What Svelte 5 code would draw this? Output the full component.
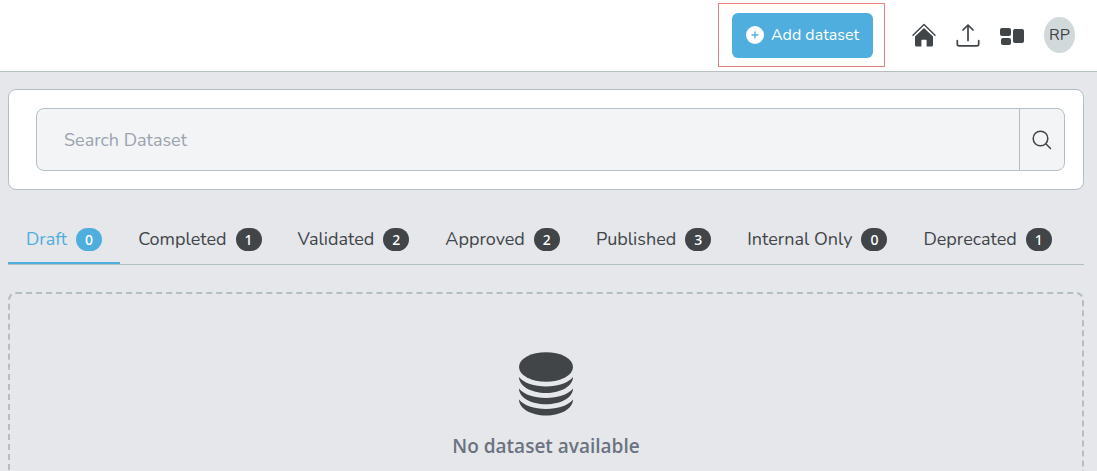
<script>
  let search = $state('');
  let active = $state('Draft');

  const tabs = [
    { name: 'Draft', count: 0 },
    { name: 'Completed', count: 1 },
    { name: 'Validated', count: 2 },
    { name: 'Approved', count: 2 },
    { name: 'Published', count: 3 },
    { name: 'Internal Only', count: 0 },
    { name: 'Deprecated', count: 1 }
  ];
</script>

<header>
  <div class="highlight">
    <button class="add">
      <svg width="18" height="18" viewBox="0 0 18 18">
        <circle cx="9" cy="9" r="9" fill="#fff" />
        <path d="M9 6v6M6 9h6" stroke="#4faedd" stroke-width="1.3" stroke-linecap="round" />
      </svg>
      Add dataset
    </button>
  </div>
  <nav>
    <a href="#home" aria-label="Home">
      <svg width="24" height="24" viewBox="0 0 24 24">
        <path d="M1 12.3 12 1.6l11 10.7" fill="none" stroke="#414548" stroke-width="1.4" stroke-linecap="round" stroke-linejoin="round" />
        <path d="M12 4.9 21 13.4V22a1.6 1.6 0 0 1-1.6 1.6h-4.8v-6.1a.7.7 0 0 0-.7-.7h-3.8a.7.7 0 0 0-.7.7v6.1H4.6A1.6 1.6 0 0 1 3 22v-8.6z" fill="#414548" />
      </svg>
    </a>
    <a href="#upload" aria-label="Upload">
      <svg width="24" height="24" viewBox="0 0 24 24" fill="none" stroke="#414548" stroke-width="1.7" stroke-linecap="round" stroke-linejoin="round">
        <path d="M12 17.5V2M7 7l5-5 5 5" />
        <path d="M1.3 17.5V21a1.8 1.8 0 0 0 1.8 1.8h17.8a1.8 1.8 0 0 0 1.8-1.8v-3.5" />
      </svg>
    </a>
    <a href="#dashboard" aria-label="Dashboard">
      <svg width="24" height="24" viewBox="0 0 24 24" fill="#414548">
        <rect x="0" y="5" width="11" height="8" rx="2" />
        <rect x="1" y="15" width="10" height="7" rx="2" />
        <rect x="13" y="6" width="11" height="14" rx="2" />
      </svg>
    </a>
    <button class="avatar">RP</button>
  </nav>
</header>

<main>
  <form class="card" onsubmit={(e) => e.preventDefault()}>
    <div class="search">
      <input type="text" placeholder="Search Dataset" aria-label="Search Dataset" bind:value={search} />
      <button aria-label="Search">
        <svg width="20" height="20" viewBox="0 0 20 20" fill="none" stroke="#414548" stroke-width="1.5" stroke-linecap="round">
          <circle cx="8.5" cy="8.5" r="7.3" />
          <path d="m13.8 13.8 4.7 4.7" />
        </svg>
      </button>
    </div>
  </form>

  <div class="tabs" role="tablist">
    {#each tabs as tab}
      <button
        class="tab"
        class:active={active === tab.name}
        role="tab"
        aria-selected={active === tab.name}
        onclick={() => (active = tab.name)}
      >
        {tab.name}
        <span class="badge">{tab.count}</span>
      </button>
    {/each}
  </div>

  <section class="empty">
    <svg width="54" height="64" viewBox="0 0 54 64" fill="#414548">
      <ellipse cx="27" cy="15" rx="27" ry="14.8" />
      <path d="M0 25c5 6 15 9.500 27 9.500S49 31 54 25c0 9-12 16-27 16S0 34 0 25z" />
      <path d="M0 36.500c5 6 15 9.500 27 9.500s22-3.500 27-9.500c0 9-12 15.800-27 15.800S0 45.500 0 36.500z" />
      <path d="M0 47.500c5 6 15 9.500 27 9.500s22-3.500 27-9.500c0 9-12 16-27 16S0 56.500 0 47.500z" />
    </svg>
    <p>No dataset available</p>
  </section>
</main>

<style>
  :global(body) {
    margin: 0;
    background: #e5e7eb;
    color: #414548;
    font-family: Nunito, Lato, "Open Sans", sans-serif;
    font-size: 18px;
  }

  button, input {
    font: inherit;
    color: inherit;
    border: none;
    background: none;
    padding: 0;
  }

  button {
    cursor: pointer;
  }

  svg {
    display: block;
  }

  header {
    display: flex;
    align-items: center;
    justify-content: flex-end;
    gap: 27px;
    box-sizing: border-box;
    height: 72px;
    padding: 0 22px 2px 0;
    background: #fff;
    border-bottom: 1px solid #b3bfc1;
  }

  .highlight {
    border: 1px solid #ec7f7f;
    padding: 9px 11px 8px 13px;
  }

  .add {
    display: flex;
    align-items: center;
    justify-content: center;
    gap: 7px;
    width: 141px;
    height: 45px;
    border-radius: 6px;
    background: #4faedd;
    color: #fff;
    font-size: 16px;
  }

  nav {
    display: flex;
    align-items: center;
    gap: 20px;
  }

  .avatar {
    width: 31px;
    height: 36px;
    border-radius: 50%;
    background: #d1d9db;
    font-size: 16px;
  }

  main {
    padding: 17px 13px 0 8px;
  }

  .card {
    padding: 18px 18px 18px 27px;
    background: #fff;
    border: 1px solid #b3bfc6;
    border-radius: 8px;
  }

  .search {
    display: flex;
    height: 61px;
    background: #f2f4f5;
    border: 1px solid #b3bfc6;
    border-radius: 8px;
  }

  .search input {
    flex: 1;
    min-width: 0;
    padding: 0 27px;
    outline: none;
  }

  .search input::placeholder {
    color: #9ca3af;
    opacity: 1;
  }

  .search button {
    display: grid;
    place-items: center;
    width: 45px;
    border-left: 1px solid #b3bfc6;
  }

  .tabs {
    display: flex;
    margin-top: 26px;
    border-bottom: 1px solid #b3bfc1;
  }

  .tab {
    display: flex;
    align-items: center;
    gap: 9px;
    height: 48px;
    padding: 0 18px;
    border-bottom: 2px solid transparent;
    white-space: nowrap;
  }

  .tab.active {
    color: #4faedd;
    border-color: #4faedd;
  }

  .badge {
    width: 26px;
    height: 23px;
    border-radius: 12px;
    background: #414548;
    color: #fff;
    font-family: "Noto Sans", sans-serif;
    font-size: 14px;
    font-weight: 500;
    line-height: 23px;
  }

  .active .badge {
    background: #4faedd;
  }

  .empty {
    display: flex;
    flex-direction: column;
    align-items: center;
    margin-top: 27px;
    padding: 58px 20px;
    border: 2px dashed #b3bfc1;
    border-radius: 8px;
  }

  .empty p {
    margin: 18px 0 0;
    color: #6b7280;
    font-family: "Open Sans", sans-serif;
    font-size: 19px;
    font-weight: 600;
    line-height: 24px;
  }
</style>
